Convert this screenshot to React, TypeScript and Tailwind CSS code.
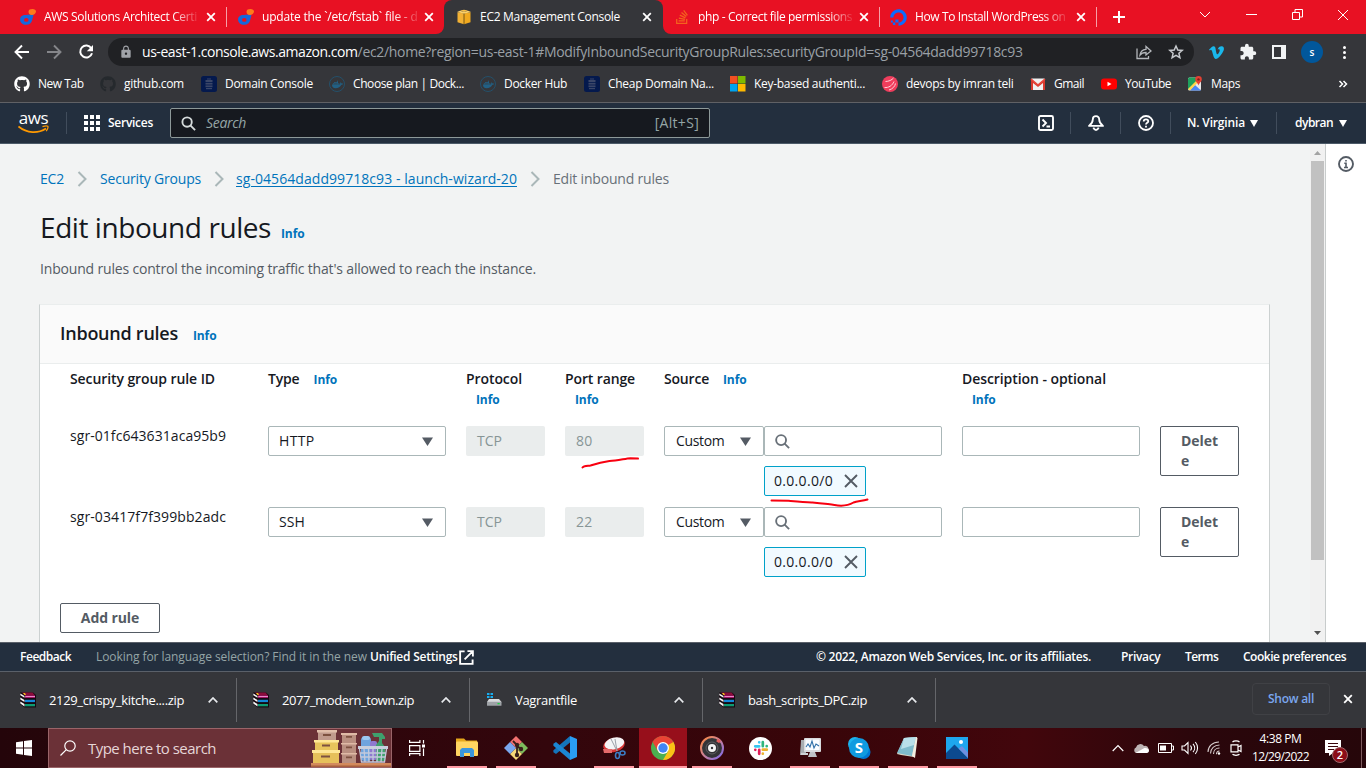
import type { ReactNode } from 'react';
import { FaGithub, FaDocker, FaStackOverflow, FaDigitalOcean, FaVimeoV } from 'react-icons/fa';
import { MdExtension, MdLock } from 'react-icons/md';

type Box = { className?: string; children?: ReactNode };

const CloseX = ({ className = '' }: Box) => (
  <svg viewBox="0 0 10 10" className={`size-[10px] shrink-0 ${className}`} stroke="#fff" strokeWidth="1.8" fill="none">
    <path d="M1.2 1.2l7.6 7.6M8.8 1.2L1.2 8.8" />
  </svg>
);

const KodeIcon = () => (
  <svg viewBox="0 0 16 16" className="size-4 shrink-0">
    <path d="M0 10.500C0 7.500 2.500 5.800 5.500 5.900L12.500 5.200c1 0 1 .8.8 1.600L12.200 11c-.6 3-2.800 4.800-5.900 4.800C2.500 15.800 0 13.500 0 10.500z" fill="#1668dc" />
    <ellipse cx="6.300" cy="10.900" rx="2.300" ry="1.900" fill="#e81123" />
    <path d="M8.500 2.800C8.500.6 10.200 0 12.500 0 14.500 0 16 .9 16 2.500 16 4.400 14 6 11.800 6S8.500 4.800 8.500 2.800z" fill="#ff7a1a" />
  </svg>
);

const CubeIcon = () => (
  <svg viewBox="0 0 16 16" className="size-4 shrink-0">
    <path d="M4 1.600L8 .8l4 .8L8 3z" fill="#f7c04a" />
    <path d="M1.500 3.200L8 4.600v10.600l-6.500-2z" fill="#f2b134" />
    <path d="M14.500 3.200L8 4.600v10.600l6.500-2z" fill="#f0a91f" />
    <path d="M1 3l3-1.200L8 3l4-1.200L15 3 8 4.800z" fill="#fbd06a" />
    <path d="M8 4.600v10.600" stroke="#5a420c" strokeWidth=".8" />
  </svg>
);

const fade = '[mask-image:linear-gradient(to_right,black_84%,rgba(0,0,0,0.15))]';

function Tab({ icon, title, className = '', text = '' }: { icon: ReactNode; title: string; className?: string; text?: string }) {
  return (
    <div className={`flex h-[34px] items-center ${className}`}>
      {icon}
      <span className={`ml-2 text-xs whitespace-nowrap text-white ${text}`}>{title}</span>
      <CloseX className="ml-auto" />
    </div>
  );
}

function TabStrip() {
  return (
    <div className="flex h-[34px] items-center bg-[#e81123]">
      <Tab icon={<KodeIcon />} title="AWS Solutions Architect Certi" className="ml-5 w-[196px]" text={`tracking-[-0.33px] ${fade}`} />
      <div className="ml-[10px] h-5 w-px bg-white/60" />
      <Tab icon={<KodeIcon />} title="update the `/etc/fstab` file - d" className="ml-[11px] w-[196px]" text={`tracking-[-0.2px] ${fade}`} />
      <div className="relative ml-[10px] h-[34px] w-[219px] rounded-t-[8px] bg-[#35363a]">
        <svg viewBox="0 0 8 8" className="absolute bottom-0 -left-2 size-2"><path d="M8 0v8H0a8 8 0 0 0 8-8z" fill="#35363a" /></svg>
        <svg viewBox="0 0 8 8" className="absolute -right-2 bottom-0 size-2"><path d="M0 0v8h8A8 8 0 0 1 0 0z" fill="#35363a" /></svg>
        <Tab icon={<CubeIcon />} title="EC2 Management Console" className="ml-3 w-[196px]" text="tracking-[-0.29px]" />
      </div>
      <Tab icon={<FaStackOverflow className="size-4 shrink-0 text-[#f4631e]" />} title="php - Correct file permissions" className="ml-[11px] w-[195px]" text={`tracking-[-0.34px] ${fade}`} />
      <div className="ml-[10px] h-5 w-px bg-white/60" />
      <Tab icon={<FaDigitalOcean className="size-[17px] shrink-0 text-[#0a6cff]" />} title="How To Install WordPress on" className="ml-[10px] w-[196px]" text={`tracking-[-0.37px] ${fade}`} />
      <div className="ml-[10px] h-5 w-px bg-white/60" />
      <svg viewBox="0 0 12 12" className="ml-4 size-3" stroke="#fff" strokeWidth="2"><path d="M6 0v12M0 6h12" /></svg>
      <div className="mb-[5px] ml-auto flex items-center">
        <svg viewBox="0 0 12 8" className="mr-[35px] h-2 w-3" stroke="#fff" fill="none"><path d="M1 1l5 5 5-5" /></svg>
        <div className="mr-[35px] h-px w-[11px] bg-white" />
        <svg viewBox="0 0 11 11" className="mr-[34px] size-[11px]" stroke="#fff" fill="none"><path d="M.5 3.500h7v7h-7zM3 3V.5h7.500V8H8" /></svg>
        <svg viewBox="0 0 12 12" className="mr-[17px] size-3" stroke="#fff" fill="none"><path d="M1 1l10 10M11 1L1 11" /></svg>
      </div>
    </div>
  );
}

function Toolbar() {
  return (
    <div className="flex h-9 items-center bg-[#35363a]">
      <svg viewBox="0 0 16 16" className="ml-[14px] size-4" stroke="#fff" strokeWidth="1.900" fill="none"><path d="M15 8H2M8 1.500L1.500 8 8 14.500" /></svg>
      <svg viewBox="0 0 16 16" className="ml-4 size-4" stroke="#85868a" strokeWidth="1.900" fill="none"><path d="M1 8h13M8 1.500L14.500 8 8 14.500" /></svg>
      <svg viewBox="0 0 16 16" className="ml-4 size-4" stroke="#fff" strokeWidth="2" fill="none"><path d="M13.300 4.300A6 6 0 1 0 14 9.300" /><path d="M15 1v6.200H8.800z" fill="#fff" stroke="none" /></svg>
      <div className="ml-[14px] flex h-7 w-[1086px] items-center rounded-full bg-[#202124] pr-[10px] pl-[11px]">
        <MdLock className="size-[14px] text-[#a0a3a8]" />
        <span className="ml-[9px] text-sm whitespace-nowrap">
          <span className="tracking-[-0.45px] text-white">us-east-1.console.aws.amazon.com</span>
          <span className="tracking-[-0.323px] text-[#9aa0a6]">/ec2/home?region=us-east-1#ModifyInboundSecurityGroupRules:securityGroupId=sg-04564dadd99718c93</span>
        </span>
        <svg viewBox="0 0 16 16" className="ml-auto size-4" stroke="#b4b7bb" strokeWidth="1.300" fill="none"><path d="M1 4.500v10h11.500V12M4 11c.5-4 2.500-5.500 6-5.700V2.500L15 7l-5 4V8.500C7.500 8.500 5.500 9 4 11z" /></svg>
        <svg viewBox="0 0 16 16" className="ml-4 size-4" stroke="#c6c9cd" strokeWidth="1.500" fill="none"><path d="M8 2l1.800 4 4.400.4-3.300 2.900 1 4.300L8 11.300l-3.900 2.300 1-4.300L1.800 6.400l4.400-.4z" /></svg>
      </div>
      <FaVimeoV className="ml-[14px] size-[17px] text-[#1ab7ea]" />
      <MdExtension className="ml-[14px] size-[18px] text-[#f1f3f4]" />
      <div className="ml-[15px] h-[14px] w-[14px] border-2 border-r-[5px] border-[#f1f3f4]" />
      <div className="ml-[15px] flex size-[22px] items-center justify-center rounded-full bg-[#01579b] text-[10px] font-semibold text-white">s</div>
      <div className="ml-5 flex flex-col gap-[2px]">
        <i className="size-[3px] rounded-full bg-white" /><i className="size-[3px] rounded-full bg-white" /><i className="size-[3px] rounded-full bg-white" />
      </div>
    </div>
  );
}

const DomainIcon = () => (
  <svg viewBox="0 0 16 16" className="size-4"><rect width="16" height="16" rx="2.500" fill="#04194d" /><g fill="#3a4668"><rect x="6" y="2.500" width="4" height="1" /><rect x="4.500" y="4" width="7" height="2" /><rect x="4.500" y="6.800" width="7" height="1.800" /><rect x="4.500" y="9.400" width="7" height="1.800" /><rect x="5" y="12" width="6" height="1.200" /></g></svg>
);
const DockerIcon = () => (
  <span className="flex size-4 items-center justify-center rounded-full border border-[#24506a]"><FaDocker className="size-[11px] text-[#226084]" /></span>
);

const bookmarks: { label: string; w: string; t: string; icon: ReactNode }[] = [
  { label: 'New Tab', w: 'w-[86px]', t: 'tracking-[-0.47px]', icon: <FaGithub className="size-4 text-white" /> },
  { label: 'github.com', w: 'w-[101px]', t: 'tracking-[-0.33px]', icon: <FaGithub className="size-4 text-[#25292d]" /> },
  { label: 'Domain Console', w: 'w-[128px]', t: 'tracking-[-0.3px]', icon: <DomainIcon /> },
  { label: 'Choose plan | Dock...', w: 'w-[151px]', t: 'tracking-[-0.41px]', icon: <DockerIcon /> },
  { label: 'Docker Hub', w: 'w-[104px]', t: 'tracking-[-0.33px]', icon: <DockerIcon /> },
  { label: 'Cheap Domain Na...', w: 'w-[146px]', t: 'tracking-[-0.29px]', icon: <DomainIcon /> },
  {
    label: 'Key-based authenti...', w: 'w-[152px]', t: 'tracking-[-0.305px]',
    icon: <svg viewBox="0 0 16 16" className="size-4"><path d="M0 0h7.500v7.500H0z" fill="#f25022" /><path d="M8 0h7.500v7.500H8z" fill="#7fba00" /><path d="M0 8h7.500v7.500H0z" fill="#00a4ef" /><path d="M8 8h7.500v7.500H8z" fill="#ffb900" /></svg>,
  },
  {
    label: 'devops by imran teli', w: 'w-[148px]', t: 'tracking-[-0.285px]',
    icon: <svg viewBox="0 0 16 16" className="size-4" fill="none"><circle cx="8" cy="8" r="8" fill="#ef3d5c" /><path d="M3.500 5.500c3 0 6.500-1.500 8-3.500M7 14c3.500-1 6-3.500 6.500-6.500M2.500 11.500c4 .5 8-2 9.500-6" stroke="#ffd0d8" strokeWidth="1" /></svg>,
  },
  {
    label: 'Gmail', w: 'w-[71px]', t: 'tracking-[-0.5px]',
    icon: <svg viewBox="0 0 16 16" className="size-4"><rect x="1" y="2.500" width="14" height="11.500" rx="1" fill="#f1f1f1" /><path d="M1 14V3.500L8 9l7-5.500V14h-2V7l-5 4-5-4v7z" fill="#d93a2f" /><path d="M1 3l7 6 7-6" stroke="#e8453a" strokeWidth="1.600" fill="none" /></svg>,
  },
  {
    label: 'YouTube', w: 'w-[86px]', t: 'tracking-[-0.47px]',
    icon: <svg viewBox="0 0 16 16" className="size-4"><rect y="2.500" width="16" height="11" rx="3" fill="#f00" /><path d="M6.500 5.700v4.600l4-2.300z" fill="#fff" /></svg>,
  },
  {
    label: 'Maps', w: 'w-[80px]', t: 'tracking-[-0.38px]',
    icon: <svg viewBox="0 0 16 16" className="size-4"><rect x="1" y="1.500" width="13" height="13" rx="1.500" fill="#e8e8e8" /><path d="M1 2.500v11L9 6V1.500H2z" fill="#1fa15d" /><path d="M2.500 14.500L8 9l6 5.500z" fill="#4b87f5" /><path d="M1 13L11 3l2 1L3 14.500z" fill="#ffd54a" /><path d="M11.500 0A3.300 3.300 0 0 0 8.200 3.400c0 2.400 2.600 3.100 3.300 6 .7-2.900 3.300-3.600 3.300-6A3.300 3.300 0 0 0 11.500 0z" fill="#e34133" /><circle cx="11.500" cy="3.400" r="1.200" fill="#7d2019" /></svg>,
  },
];

function Bookmarks() {
  return (
    <div className="flex h-[33px] items-center border-b border-[#606165] bg-[#35363a] pt-[1px] pb-[5px] pl-[14px] text-xs text-white">
      {bookmarks.map((b, i) => (
        <div key={i} className={`flex shrink-0 items-center gap-2 whitespace-nowrap ${b.w} ${b.t}`}>{b.icon}{b.label}</div>
      ))}
      <svg viewBox="0 0 10 8" className="mr-[18px] ml-auto h-2 w-[10px]" stroke="#fff" strokeWidth="1.500" fill="none"><path d="M1.500 1l3 3-3 3M5.500 1l3 3-3 3" /></svg>
    </div>
  );
}

const Caret = () => <svg viewBox="0 0 8 7" className="h-[7px] w-2" fill="#fff"><path d="M0 0h8L4 7z" /></svg>;
const Divider = ({ className = '' }: Box) => <div className={`h-[22px] w-px bg-[#414d5c] ${className}`} />;

function AwsHeader() {
  return (
    <header className="flex h-[41px] shrink-0 items-center border-b border-[#4c5a68] bg-[#232f3e] text-xs text-white">
      <div className="ml-[18px] flex w-[31px] flex-col items-center pt-px">
        <span className="h-[11px] text-[17px] leading-[8px] font-medium tracking-[-0.4px]">aws</span>
        <svg viewBox="0 0 31 9" className="h-[9px] w-[31px]" fill="none" stroke="#f90" strokeWidth="1.700"><path d="M.5 1.500C9 8.500 20 8.800 28 3.500" /><path d="M24.500 1.600c2-.6 4.500-.9 5.300-.3.600.8-.3 3-1.600 4.900" strokeWidth="1.300" /></svg>
      </div>
      <Divider className="ml-[17px]" />
      <div className="ml-[17px] grid grid-cols-3 gap-[2px]">
        {Array.from({ length: 9 }, (_, i) => <i key={i} className="size-[4px] bg-white" />)}
      </div>
      <span className="ml-2 font-semibold tracking-[-0.27px]">Services</span>
      <div className="ml-[17px] flex h-[30px] w-[540px] items-center rounded-[2px] border border-[#8d9999] bg-[#16191f] px-[10px] text-sm text-[#95a5a6]">
        <svg viewBox="0 0 16 16" className="size-[15px]" stroke="#d5dbdb" strokeWidth="2" fill="none"><circle cx="6.500" cy="6.500" r="5" /><path d="M10 10l5 5" /></svg>
        <span className="ml-[10px] tracking-[-0.3px] italic">Search</span>
        <span className="ml-auto tracking-[0.3px]">[Alt+S]</span>
      </div>
      <svg viewBox="0 0 16 16" className="ml-auto size-4" stroke="#fff" strokeWidth="1.900" fill="none"><rect x="1" y="1" width="14" height="14" rx="1.500" /><path d="M4.500 4.500L8 8l-3.500 3.500M8.500 11.500H12" /></svg>
      <Divider className="ml-4" />
      <svg viewBox="0 0 16 16" className="ml-[17px] size-4" stroke="#fff" strokeWidth="1.800" fill="none" strokeLinejoin="round"><path d="M8 1.200c-2 0-3.200 1.500-3.200 3.300 0 2.800-1.200 4.400-3.800 6.400h14c-2.600-2-3.800-3.600-3.800-6.400C11.200 2.700 10 1.200 8 1.200zM5.300 12.700C6 14.300 7 15 8 15s2-.7 2.700-2.300" /></svg>
      <Divider className="ml-4" />
      <svg viewBox="0 0 16 16" className="ml-[17px] size-4" stroke="#fff" strokeWidth="1.800" fill="none"><circle cx="8" cy="8" r="7" /><path d="M5.700 6.500c0-1.300 1-2.200 2.300-2.200s2.300.8 2.300 2c0 1.500-2.300 1.600-2.300 3.200M8 10.800v1.600" /></svg>
      <Divider className="ml-4" />
      <span className="ml-4 flex w-[71px] items-center justify-between font-semibold tracking-[-0.16px]">N. Virginia<Caret /></span>
      <Divider className="ml-[18px]" />
      <span className="mr-[19px] ml-[18px] flex w-[52px] items-center justify-between font-semibold tracking-[-0.5px]">dybran<Caret /></span>
    </header>
  );
}

const Info = ({ className = '' }: Box) => <a className={`text-xs font-bold tracking-[-0.11px] text-[#0073bb] ${className}`}>Info</a>;
const Sep = ({ className = '' }: Box) => <svg viewBox="0 0 10 16" className={`h-4 w-[10px] ${className}`} stroke="#aab7b8" strokeWidth="2" fill="none"><path d="M1.500 1L8.500 8l-7 7" /></svg>;
const Down = ({ className = '' }: Box) => <svg viewBox="0 0 11 9" className={`h-[9px] w-[11px] ${className}`} fill="#545b64"><path d="M0 .5h11L5.500 9z" /></svg>;

const cols = 'grid grid-cols-[178px_178px_79px_79px_278px_178px_79px] gap-x-5 px-[30px]';

function RuleRow({ id, type, port, t, tt }: { id: string; type: string; port: string; t: string; tt: string }) {
  return (
    <div className={`${cols} h-[81px] items-start text-sm text-[#16191f]`}>
      <span className={`leading-5 ${t}`}>{id}</span>
      <div className="flex h-[30px] items-center justify-between rounded-[2px] border border-[#aab7b8] pr-3 pl-[10px]">
        <span className={tt}>{type}</span><Down />
      </div>
      <div className="flex h-[30px] items-center rounded-[2px] bg-[#eaeded] pl-[11px] text-[#879596]">TCP</div>
      <div className="flex h-[30px] items-center rounded-[2px] bg-[#eaeded] pl-[11px] tracking-[0.2px] text-[#879596]">{port}</div>
      <div>
        <div className="flex">
          <div className="flex h-[30px] w-[100px] items-center justify-between rounded-[2px] border border-[#aab7b8] pr-3 pl-[11px] tracking-[-0.325px]">Custom<Down /></div>
          <div className="flex h-[30px] w-[178px] items-center rounded-[2px] border border-[#aab7b8] pl-[10px]">
            <svg viewBox="0 0 16 16" className="size-[15px]" stroke="#687078" strokeWidth="2" fill="none"><circle cx="6.500" cy="6.500" r="5.300" /><path d="M10 10l5 5" /></svg>
          </div>
        </div>
        <div className="mt-[10px] ml-[100px] flex h-[30px] w-[102px] items-center justify-between rounded-[2px] border border-[#00a1c9] bg-[#f1faff] pr-[7px] pl-[9px] tracking-[0.31px]">
          0.0.0.0/0
          <svg viewBox="0 0 14 14" className="size-[14px]" stroke="#545b64" strokeWidth="1.900" fill="none"><path d="M1 1l12 12M13 1L1 13" /></svg>
        </div>
      </div>
      <div className="h-[30px] rounded-[2px] border border-[#aab7b8]" />
      <div className="h-[50px] rounded-[2px] border border-[#545b64] pt-1 pl-5 leading-5 font-bold tracking-[-0.05px] whitespace-nowrap text-[#545b64]">Delet<br />e</div>
    </div>
  );
}

function Page() {
  return (
    <div className="flex h-[498px] shrink-0 bg-[#f2f3f3]">
      <main className="h-full w-[1310px] shrink-0 overflow-hidden pl-[39px]">
        <nav className="mt-[25px] flex h-5 items-center pl-px text-sm whitespace-nowrap text-[#0073bb]">
          <span className="w-6 tracking-[-0.2px]">EC2</span>
          <Sep className="ml-[13px]" />
          <span className="ml-[13px] w-[101px] tracking-[-0.19px]">Security Groups</span>
          <Sep className="ml-[13px]" />
          <span className="ml-[12px] w-[282px] tracking-[0.061px] underline underline-offset-2">sg-04564dadd99718c93 - launch-wizard-20</span>
          <Sep className="ml-3" />
          <span className="ml-[13px] tracking-[-0.187px] text-[#687078]">Edit inbound rules</span>
        </nav>
        <div className="mt-5 flex h-9 items-baseline pl-px">
          <h1 className="text-[28px] leading-9 tracking-[-0.43px] text-[#16191f]">Edit inbound rules</h1>
          <Info className="ml-[10px]" />
        </div>
        <p className="mt-[14px] pl-px text-sm leading-5 tracking-[-0.175px] text-[#545b64]">Inbound rules control the incoming traffic that's allowed to reach the instance.</p>
        <section className="mt-[25px] h-[400px] w-[1231px] border border-t-[#eaeded] border-x-[#ccd1d1] bg-white">
          <div className="flex h-[59px] items-baseline border-b border-[#eaeded] bg-[#fafafa] pt-[15px] pl-5">
            <h2 className="text-lg leading-[26px] font-semibold tracking-[-0.25px] text-[#16191f]">Inbound rules</h2>
            <Info className="ml-[15px]" />
          </div>
          <div className={`${cols} h-[62px] pt-[5px] text-sm leading-5 font-semibold text-[#16191f]`}>
            <span className="tracking-[-0.086px]">Security group rule ID</span>
            <span className="tracking-[-0.17px]">Type<Info className="ml-[14px]" /></span>
            <span className="tracking-[-0.085px]">Protocol<br /><Info className="ml-[10px]" /></span>
            <span className="tracking-[-0.125px]">Port range<br /><Info className="ml-[10px]" /></span>
            <span className="tracking-[-0.2px]">Source<Info className="ml-[14px]" /></span>
            <span className="tracking-[-0.072px]">Description - optional<br /><Info className="ml-[10px]" /></span>
          </div>
          <RuleRow id="sgr-01fc643631aca95b9" type="HTTP" port="80" t="tracking-[0.06px]" tt="tracking-[0.33px]" />
          <RuleRow id="sgr-03417f7f399bb2adc" type="SSH" port="22" t="tracking-[0.09px]" tt="tracking-[0.1px]" />
          <button className="mt-[15px] ml-5 flex h-[30px] w-[100px] items-center justify-center rounded-[2px] border border-[#545b64] text-sm font-bold tracking-[-0.1px] text-[#545b64]">Add rule</button>
        </section>
      </main>
      <div className="flex w-[15px] flex-col bg-[#f1f1f1]">
        <svg viewBox="0 0 7 4" className="mt-[7px] mb-[6px] ml-1 h-1 w-[7px] shrink-0" fill="#a3a3a3"><path d="M0 4h7L3.500 0z" /></svg>
        <div className="ml-px h-[399px] w-[13px] shrink-0 bg-[#c1c1c1]" />
        <svg viewBox="0 0 7 4" className="mt-auto mb-[7px] ml-1 h-1 w-[7px] shrink-0" fill="#505050"><path d="M0 0h7L3.500 4z" /></svg>
      </div>
      <aside className="flex flex-1 justify-center border-l border-[#c8cccc] bg-white pt-3">
        <svg viewBox="0 0 16 16" className="size-4" stroke="#545b64" strokeWidth="1.900" fill="none"><circle cx="8" cy="8" r="7" /><path d="M6.300 7.300H8v4M6 11.500h4M7.200 4.700h1.600" strokeWidth="1.600" /></svg>
      </aside>
    </div>
  );
}

function Footer() {
  return (
    <footer className="flex h-[30px] shrink-0 items-center border-y border-[#5a6069] bg-[#232f3e] pl-5 text-xs font-semibold whitespace-nowrap text-white">
      <span className="w-[76px] tracking-[-0.46px]">Feedback</span>
      <span className="w-[274px] font-normal tracking-[-0.066px] text-[#95a5a6]">Looking for language selection? Find it in the new</span>
      <span className="w-[89px] tracking-[-0.24px]">Unified Settings</span>
      <svg viewBox="0 0 16 16" className="size-[15px]" stroke="#fff" strokeWidth="2" fill="none"><path d="M6 1.500H1.200v13.300h13.300V10M9 1.200h5.800V7M14.500 1.500L6 10" /></svg>
      <span className="ml-auto w-[305px] tracking-[-0.273px]">© 2022, Amazon Web Services, Inc. or its affiliates.</span>
      <span className="w-16 tracking-[-0.31px]">Privacy</span>
      <span className="w-[58px] tracking-[-0.6px]">Terms</span>
      <span className="w-[123px] tracking-[-0.486px]">Cookie preferences</span>
    </footer>
  );
}

const RarIcon = () => (
  <svg viewBox="0 0 16 16" className="size-4">
    <path d="M0 .5h13L16 3v12.500H4.500L0 12z" fill="#160a12" />
    <path d="M2 .5h10.500l2.500 3H5z" fill="#8a0c3a" />
    <path d="M5 3.500h10v2.300H5z" fill="#c0187a" /><path d="M5.500 4h9.500v.8H5.500z" fill="#f7a6dc" />
    <path d="M5 7.800h10v2.300H5z" fill="#1287d8" /><path d="M5 12h10v2.300H5z" fill="#0e9a72" />
    <path d="M.3 1.500L4.500 4v1.800L.3 3.300zM.3 5.500L4.500 8v2L.3 7.500zM.3 9.500L4.500 12v2.500L.3 11.500z" fill="#f5f5f5" />
    <path d="M3 1h2l1 2H4.500z" fill="#f0c419" />
  </svg>
);
const VagrantIcon = () => (
  <svg viewBox="0 0 16 16" className="size-4">
    <path d="M1 1h2.500v2H1zM4.500 1H7v2H4.500zM1 4h2.500v2H1zM4.500 4H7v2H4.500z" fill="#18aef0" />
    <path d="M3 7h10l2.500 3H1z" fill="#d8dadc" /><rect x="1" y="9.700" width="14.500" height="4" rx=".5" fill="#9fa3a7" /><rect x="11.500" y="11" width="2.200" height="1.300" fill="#1dd143" />
  </svg>
);

const downloads = [
  { name: '2129_crispy_kitche....zip', t: 'tracking-[-0.354px]', zip: true, w: 'w-[237px] pl-5' },
  { name: '2077_modern_town.zip', t: 'tracking-[-0.438px]', zip: true, w: 'w-[233px] pl-4' },
  { name: 'Vagrantfile', t: 'tracking-[-0.31px]', zip: false, w: 'w-[233px] pl-4' },
  { name: 'bash_scripts_DPC.zip', t: 'tracking-[-0.386px]', zip: true, w: 'w-[233px] pl-4' },
];

function Downloads() {
  return (
    <div className="flex h-14 shrink-0 items-center bg-[#35363a] text-[13px] text-white">
      {downloads.map((d) => (
        <div key={d.name} className={`flex h-11 items-center border-r border-[#65666a] ${d.w} pr-[18px]`}>
          {d.zip ? <RarIcon /> : <VagrantIcon />}
          <span className={`ml-[13px] pt-px whitespace-nowrap ${d.t}`}>{d.name}</span>
          <svg viewBox="0 0 10 6" className="ml-auto h-[6px] w-[10px]" stroke="#e8eaed" strokeWidth="1.700" fill="none"><path d="M.7 5.300L5 1l4.300 4.300" /></svg>
        </div>
      ))}
      <div className="mb-[2px] ml-auto flex h-8 w-[78px] items-center justify-center rounded-[4px] border border-[#404145] text-xs font-semibold tracking-[-0.26px] text-[#7ba6ee]">Show all</div>
      <CloseX className="mr-[13px] mb-[2px] ml-[13px]" />
    </div>
  );
}

const Shelf = () => (
  <svg viewBox="0 0 80 38" className="mt-auto h-[38px] w-[80px]">
    <path d="M0 34h80v4H0z" fill="#d38a5c" /><path d="M0 36.500h80V38H0z" fill="#a85f3c" />
    <rect x="7" y="2" width="18" height="10" fill="#c09a8c" /><rect x="6" y="1" width="20" height="2.500" fill="#e0bda9" />
    <rect x="4" y="12" width="23" height="10" fill="#e8c45c" /><rect x="3" y="11" width="25" height="2.500" fill="#ffe796" />
    <rect x="2" y="22" width="26" height="12" fill="#e6c05a" /><rect x="1" y="21" width="28" height="3" fill="#ffe796" />
    <rect x="31" y="5" width="14" height="29" fill="#b98f80" /><path d="M30 4h16v2H30zM30 14h16v1.500H30zM30 24h16v1.500H30z" fill="#dfbaa6" />
    <path d="M12 5h8v2h-8zM11 15.500h8v2h-8zM10 26.500h9v2h-9zM35 7h6v1.800h-6zM35 17.500h6v1.800h-6zM35 27.500h6v1.800h-6z" fill="#7d5140" />
    <rect x="50" y="8" width="10" height="24" rx="3" fill="#6fa4de" /><rect x="51" y="7" width="8" height="4" rx="2" fill="#9cc8f2" />
    <rect x="59" y="12" width="7" height="19" rx="2" fill="#8f79cf" />
    <path d="M61 4h10l3 4v2h-3v4l3 4v14h-9V16l3-4V8h-5z" fill="#3fa06d" />
    <path d="M47 17h30v3H47z" fill="#c9cfdd" />
    <path d="M48.500 20l2 13h23l2-13M49 24h26M50 28h24M53 20l1 13M57.500 20l.5 13M62 20v13M66.500 20l-.5 13M71 20l-1 13M50 32.800h24" stroke="#c3c9dc" strokeWidth="1.300" fill="none" />
  </svg>
);

const s24 = 'size-6';
const apps: { id: string; run: boolean; active?: boolean; icon: ReactNode }[] = [
  { id: 'files', run: true, icon: <svg viewBox="0 0 24 24" className={s24}><path d="M1 2.500h8l2 2h11v5H1z" fill="#e5a81c" /><rect x="1" y="5.500" width="22" height="14.500" rx="1" fill="#ffd562" /><path d="M5 21v-7l2-2h10l2 2v7h-4v-4H9v4z" fill="#3a96dd" /></svg> },
  { id: 'git', run: true, icon: <svg viewBox="0 0 24 24" className={s24}><path d="M12 0l6 6-6 6-6-6z" fill="#f2716f" /><path d="M18 6l6 6-6 6-6-6z" fill="#7dbb5c" /><path d="M12 12l6 6-6 6-6-6z" fill="#f7d877" /><path d="M6 6l6 6-6 6-6-6z" fill="#7aa8ef" /><path d="M9 5l4 4v10M13 10l4 3" stroke="#38201b" strokeWidth="1.800" fill="none" /><g fill="#38201b"><circle cx="13" cy="9" r="2.200" /><circle cx="17" cy="13" r="2.200" /><circle cx="13" cy="19" r="2.200" /></g></svg> },
  { id: 'code', run: false, icon: <svg viewBox="0 0 24 24" className={s24}><path d="M17 0l7 3v18l-7 3z" fill="#2a9df4" /><path d="M17 0v6.500L3 18 .4 16.200v-2L17 0z" fill="#1474bb" /><path d="M17 24v-6.500L3 6 .4 7.800v2L17 24z" fill="#1b86d3" /></svg> },
  { id: 'snip', run: true, icon: <svg viewBox="0 0 24 24" className={s24}><ellipse cx="12" cy="9" rx="11" ry="7" fill="#d93636" transform="rotate(-14 12 9)" /><ellipse cx="12.500" cy="7.500" rx="10" ry="5.800" fill="#f4f4f6" transform="rotate(-14 12 8)" /><path d="M9 3l6 12M13 3l2 12" stroke="#9aa0a8" strokeWidth="1" /><path d="M1 13h9v4H2z" fill="#e46a6a" /><g stroke="#3b7cc4" strokeWidth="1.600" fill="none"><ellipse cx="15.500" cy="19.500" rx="2" ry="3" /><ellipse cx="20.500" cy="17" rx="2.500" ry="2" /></g></svg> },
  { id: 'chrome', run: true, active: true, icon: <svg viewBox="0 0 24 24" className={s24}><circle cx="12" cy="12" r="12" fill="#4caf50" /><path d="M1.600 6A12 12 0 0 1 22.400 6L12 6.500 6.800 15z" fill="#ea4335" /><path d="M22.400 6A12 12 0 0 1 12 24l5.200-9L12 6z" fill="#fbc116" /><path d="M12 6h10.400L17 9z" fill="#ea4335" /><circle cx="12" cy="12" r="6" fill="#fff" /><circle cx="12" cy="12" r="4.700" fill="#4285f4" /></svg> },
  { id: 'music', run: true, icon: <svg viewBox="0 0 24 24" className={s24}><defs><linearGradient id="ring" x1="0" y1="0" x2="1" y2="1"><stop offset="0" stopColor="#ff8a3c" /><stop offset=".5" stopColor="#c9809a" /><stop offset="1" stopColor="#7a6af0" /></linearGradient></defs><circle cx="12" cy="12" r="11" fill="#343437" stroke="url(#ring)" strokeWidth="2" /><path d="M17 4l3 2" stroke="#e35b5b" strokeWidth="3" /><circle cx="12" cy="12" r="6" fill="none" stroke="#606064" strokeWidth="1" /><circle cx="12" cy="12" r="4" fill="#f4f4f4" /><circle cx="12" cy="12" r="1.200" fill="#343437" /></svg> },
  { id: 'slack', run: false, icon: <span className="flex size-[23px] items-center justify-center rounded-full bg-white"><svg viewBox="0 0 16 16" className="size-4" strokeWidth="2.700" strokeLinecap="round"><path d="M2.200 6.300h4M6.200 2.300h.01" stroke="#36c5f0" /><path d="M9.800 2.200v4M13.700 6.200v.01" stroke="#2eb67d" /><path d="M9.800 9.700h4M9.800 13.700h.01" stroke="#ecb22e" /><path d="M6.200 9.800v4M2.300 9.800v.01" stroke="#e01e5a" /></svg></span> },
  { id: 'perf', run: true, icon: <svg viewBox="0 0 24 24" className={s24}><path d="M3 4h5v15H2z" fill="#a9adb1" /><rect x="6" y="2" width="17" height="14" rx="1" fill="#d8dbde" /><rect x="7.500" y="3.500" width="14" height="10.500" fill="#fafcff" /><path d="M8 11l2-3 2 3 2-6 2 7 2-4 3 2" stroke="#2f6fa8" strokeWidth="1.100" fill="none" /><path d="M12 16h5l2 5h-9z" fill="#bfc3c7" /><path d="M3 17h7v2H3z" fill="#cfd2d5" /></svg> },
  { id: 'skype', run: true, icon: <svg viewBox="0 0 24 24" className={s24}><circle cx="8" cy="8" r="7" fill="#1cb4ee" /><circle cx="16.500" cy="16" r="7" fill="#0078d4" /><circle cx="12" cy="12" r="10" fill="#0f9be0" /><text x="12" y="17.200" textAnchor="middle" fontSize="15" fontWeight="700" fill="#fff">S</text></svg> },
  { id: 'note', run: true, icon: <svg viewBox="0 0 24 24" className={s24}><path d="M8 2l13-1-3 20-13-2-4-1z" fill="#dcd6c4" /><path d="M8 2l12-1-4 19L1 17z" fill="#7fbccd" /><path d="M8 2l12-1-2 8L5 13z" fill="#b9e0ea" /><path d="M16 20l4-19 1.500 1L19 22z" fill="#f3efe2" /></svg> },
  { id: 'photos', run: true, icon: <svg viewBox="0 0 24 24" className={s24}><path d="M1 1h22v22H1z" fill="#1ea7ee" /><path d="M1 17l8.500-8.500L23 22v1H1z" fill="#0c4a8f" /><path d="M13.500 12.500L17 10l6 6.500V22z" fill="#6f8fe0" /><circle cx="16" cy="6" r="2" fill="#fff" /></svg> },
];

function Taskbar() {
  return (
    <div className="flex h-10 shrink-0 items-center bg-[linear-gradient(90deg,#24050a,#33060c_40%,#380509_60%,#42060c_75%,#2a060b_88%,#26060a)]">
      <div className="flex w-12 justify-center">
        <svg viewBox="0 0 16 16" className="size-4" fill="#fff"><path d="M0 2.200L7 1.200v6.300H0zM8 1l8-1v7.500H8zM0 8.500h7v6.300l-7-1zM8 8.500h8V16l-8-1z" /></svg>
      </div>
      <div className="flex h-10 w-[344px] items-center border border-[#9a6468] bg-[#6b3137] pl-[11px]">
        <svg viewBox="0 0 16 16" className="size-4" stroke="#fff" strokeWidth="1.200" fill="none"><circle cx="10" cy="6" r="5.200" /><path d="M6.300 9.700L.5 15.500" /></svg>
        <span className="ml-3 text-[15px] tracking-[-0.53px] text-[#e6d6d7]">Type here to search</span>
        <span className="ml-auto flex h-full"><Shelf /></span>
      </div>
      <div className="flex w-[49px] justify-center">
        <svg viewBox="0 0 16 16" className="size-4" stroke="#fff" strokeWidth="1.200" fill="none"><path d="M.6 0v2.400h10.300V0M.6 5.600h10.300v5.800H.6zM.6 16v-2.400h10.300V16M14.500 0v3.500M14.500 8.500V16" /><path d="M13 4.500h3v3h-3z" fill="#fff" stroke="none" /></svg>
      </div>
      {apps.map((a, i) => (
        <div key={a.id} className={`flex w-[49px] justify-center ${i === 0 ? 'ml-px' : ''}`}>
          <div className={`flex h-10 flex-col items-center ${a.active ? 'w-12 bg-[#970f1b]' : 'w-10'}`}>
            <div className="flex h-[38px] items-center pt-[2px]">{a.icon}</div>
            {a.run && <div className="h-[2px] w-full bg-[#ff9ba4]" />}
          </div>
        </div>
      ))}
      <div className="ml-auto flex items-center">
        <svg viewBox="0 0 12 8" className="h-2 w-3" stroke="#fff" strokeWidth="1.200" fill="none"><path d="M.7 7L6 1.500 11.300 7" /></svg>
        <svg viewBox="0 0 16 10" className="ml-[9px] h-[10px] w-4"><path d="M3 10a3 3 0 0 1 0-5.500A4.500 4.500 0 0 1 11 3a3.500 3.500 0 0 1 2 7z" fill="#bdb4b5" /><path d="M2.500 10l8-4.500c2-1 5.500 0 5.500 2.300 0 1.200-.9 2.200-2.300 2.200z" fill="#fff" /></svg>
        <svg viewBox="0 0 16 10" className="ml-[9px] h-[10px] w-4" fill="none" stroke="#fff"><path d="M.5 .5h13v9H.5zM14 3h1.500v4H14" /><path d="M2 2.500h6v5H2z" fill="#fff" stroke="none" /></svg>
        <svg viewBox="0 0 18 14" className="ml-[7px] h-[14px] w-[18px]" fill="none" stroke="#fff" strokeWidth="1.100"><path d="M1 5h2.500L7 1.500v11L3.500 9H1zM9.500 4.500c1.200 1.500 1.200 3.500 0 5M12 2.800c2.200 2.500 2.200 6 0 8.400M14.300 1c3 3.500 3 8.500 0 12" /></svg>
        <svg viewBox="0 0 14 14" className="ml-[8px] size-[14px]" fill="none" stroke="#fff" strokeWidth="1.100"><path d="M1 11C1 5.500 5.500 1 12 1M3.500 12.500C3.500 7.500 7.500 4 12.500 4M6.500 13c0-3.500 2.500-6 6-6M9.500 13.300c0-2 1.200-3.300 3-3.300" stroke="#d6cccd" /><circle cx="12" cy="12.500" r="1.200" fill="#fff" stroke="none" /></svg>
        <svg viewBox="0 0 12 16" className="ml-[9px] h-4 w-3" fill="none" stroke="#fff" strokeWidth="1.200"><path d="M1 4.800h7v7H1zM8 7l3-1.500v6L8 10M2.500 2C4 .6 8 .6 9.500 2M2.500 14.300c1.500 1.300 5.500 1.300 7 0" /></svg>
        <div className="ml-[9px] w-[59px] text-center text-xs leading-[18px] whitespace-nowrap text-white">
          <div className="tracking-[-0.41px]">4:38 PM</div>
          <div className="tracking-[-0.669px]">12/29/2022</div>
        </div>
        <div className="relative mr-[19px] ml-[14px] h-[18px] w-[18px]">
          <svg viewBox="0 0 18 18" className="size-[18px]"><path d="M1 1h16v13h-8l-4 3v-3H1z" fill="#fff" /><path d="M4 4.500h10M4 7.500h10M4 10.500h6" stroke="#3a070d" /></svg>
          <span className="absolute top-2 left-2 flex size-4 items-center justify-center rounded-full border border-[#a06a6e] bg-[#8c0e18] text-[11px] font-semibold text-white">2</span>
        </div>
        <div className="mr-1 h-10 w-px bg-[#7d5a5d]" />
      </div>
    </div>
  );
}

export default function App() {
  return (
    <div className="relative flex h-[768px] w-[1366px] flex-col overflow-hidden font-['Open_Sans','Noto_Sans',sans-serif]">
      <TabStrip />
      <Toolbar />
      <Bookmarks />
      <AwsHeader />
      <Page />
      <Footer />
      <Downloads />
      <Taskbar />
      <svg viewBox="0 0 300 60" className="pointer-events-none absolute top-[450px] left-[575px] h-[60px] w-[300px]" fill="none" stroke="#f80010" strokeWidth="2" strokeLinecap="round" strokeLinejoin="round">
        <path d="M7.500 17.500c1-1.500 5-1.500 8-2 6-2 11-3.500 19-4.500 8-.3 16-2.500 21-2.800l7.500.4" />
        <path d="M196.500 50.500l17 .3c8 .8 16 1.700 24 1.600 9 .6 14 1.600 22 2.600 7 1.300 13 1 19-2.500 4-1.500 9-1.300 14-3" />
      </svg>
    </div>
  );
}
